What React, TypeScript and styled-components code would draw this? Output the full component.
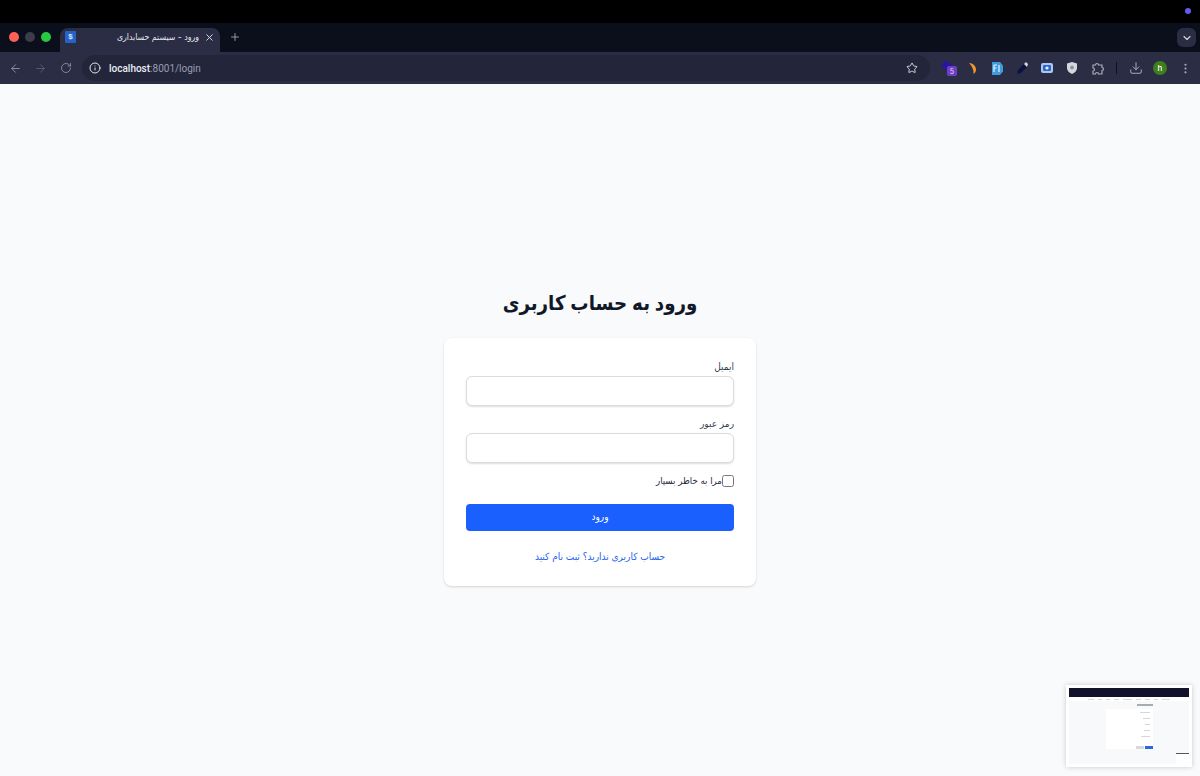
import styled, { createGlobalStyle } from "styled-components"
import {
  ArrowLeft,
  ArrowRight,
  ChevronDown,
  Download,
  EllipsisVertical,
  Info,
  Plus,
  RotateCw,
  Star,
  X,
} from "lucide-react"

const GlobalStyle = createGlobalStyle`
  html, body {
    margin: 0;
    height: 100%;
    background: #f9fafb;
  }
  * {
    box-sizing: border-box;
  }
  #root {
    height: 776px;
    overflow: hidden;
    font-family: "Inter", "DejaVu Sans Condensed", "DejaVu Sans", sans-serif;
  }
`

const Screen = styled.div`
  display: flex;
  flex-direction: column;
  height: 776px;
  position: relative;
`

const MenuStrip = styled.div`
  height: 23px;
  background: #000;
  display: flex;
  justify-content: flex-end;
  align-items: center;
  padding: 0 9px 1px 0;
`

const StatusDot = styled.span`
  width: 6px;
  height: 6px;
  border-radius: 50%;
  background: #5f5cf0;
`

const TabBar = styled.div`
  height: 29px;
  background: #0b0e1b;
  display: flex;
  align-items: flex-end;
  padding-left: 9px;
`

const Lights = styled.div`
  display: flex;
  gap: 6px;
  height: 29px;
  align-items: center;
  padding-bottom: 1px;
`

const Light = styled.span<{ $color: string }>`
  width: 10px;
  height: 10px;
  border-radius: 50%;
  background: ${({ $color }) => $color};
`

const Tab = styled.div`
  width: 160px;
  height: 24px;
  margin-left: 9px;
  background: #2a2d43;
  border-radius: 8px 8px 0 0;
  display: flex;
  align-items: center;
  padding: 0 5px 6px;
  color: #e6e7ee;
`

const Favicon = styled.span`
  width: 11px;
  height: 12px;
  flex: none;
  background: #2563c9;
  border-radius: 1px;
  color: #dbe6fb;
  font: 700 8px/12px "Liberation Sans", sans-serif;
  text-align: center;
`

const TabTitle = styled.span`
  flex: 1;
  direction: rtl;
  font-size: 8.7px;
  line-height: 12px;
  white-space: nowrap;
  padding-right: 5px;
  text-align: right;
`

const NewTab = styled.span`
  height: 24px;
  margin-left: 9px;
  padding-bottom: 6px;
  display: flex;
  align-items: center;
  color: #b4b7c6;
`

const TabMenu = styled.span`
  margin-left: auto;
  margin-right: 4px;
  margin-bottom: 5px;
  width: 19px;
  height: 19px;
  border-radius: 6px;
  background: #2a2d43;
  color: #d6d8e2;
  display: flex;
  align-items: center;
  justify-content: center;
`

const Toolbar = styled.div`
  height: 32px;
  background: #2a2d43;
  display: flex;
  align-items: center;
  padding-left: 9px;
`

const NavButton = styled.span<{ $dim?: boolean }>`
  width: 13px;
  display: flex;
  justify-content: center;
  margin-right: 12px;
  color: ${({ $dim }) => ($dim ? "#565a73" : "#8b8ea3")};
`

const AddressBar = styled.div`
  width: 848px;
  height: 26px;
  margin-left: -2px;
  border-radius: 13px;
  background: #23263b;
  display: flex;
  align-items: center;
  padding: 0 12px 0 7px;
  color: #e4e5ec;
`

const Url = styled.span`
  margin-left: 8px;
  font-family: "Roboto", sans-serif;
  font-size: 10px;
  color: #9a9db0;
  flex: 1;
  b {
    color: #eceef4;
    font-weight: 500;
  }
`

const Extensions = styled.div`
  flex: 1;
  display: flex;
  align-items: center;
  padding-left: 6px;
  color: #a9acbd;
`

const Ext = styled.span<{ $w: number }>`
  width: ${({ $w }) => $w}px;
  display: flex;
  justify-content: center;
  align-items: center;
  flex: none;
`

const Divider = styled.span`
  width: 1px;
  height: 12px;
  background: #0f1120;
  margin: 0 6px 0 5px;
`

const Avatar = styled.span`
  width: 14px;
  height: 14px;
  border-radius: 50%;
  background: #3f7d1d;
  color: #fff;
  font: 500 8px/14px "Inter", sans-serif;
  text-align: center;
`

const Page = styled.main`
  flex: 1;
  background: #f9fafb;
  display: flex;
  flex-direction: column;
  align-items: center;
  padding-top: 202px;
  direction: rtl;
`

const Heading = styled.h1`
  margin: 0 0 18px;
  font-size: 20.3px;
  line-height: 34px;
  font-weight: 700;
  color: #111827;
`

const Card = styled.form`
  width: 312px;
  height: 248px;
  background: #fff;
  border-radius: 8px;
  box-shadow: 0 1px 3px rgba(0, 0, 0, 0.1), 0 1px 2px rgba(0, 0, 0, 0.06);
  padding: 20px 22px 0;
  display: flex;
  flex-direction: column;
`

const Field = styled.label`
  display: flex;
  flex-direction: column;
  gap: 2px;
  margin-bottom: 9px;
  font-size: 10px;
  line-height: 16px;
  color: #374151;
`

const Input = styled.input`
  height: 30px;
  border: 1px solid #d9dce1;
  border-radius: 6px;
  background: #fff;
  box-shadow: 0 1px 2px rgba(0, 0, 0, 0.14);
  outline: none;
`

const Remember = styled.label`
  display: flex;
  align-items: center;
  height: 12px;
  margin-top: 3px;
  font-size: 9.6px;
  line-height: 10px;
  color: #1f2937;
`

const Check = styled.input`
  appearance: none;
  width: 12px;
  height: 12px;
  margin: 0;
  border: 1px solid #767676;
  border-radius: 2.5px;
  background: #fff;
`

const Submit = styled.button`
  flex: none;
  margin-top: 17px;
  height: 27px;
  padding: 0 0 3px;
  border: none;
  border-radius: 4px;
  background: #1a60ff;
  color: #fff;
  font-family: inherit;
  font-size: 10px;
`

const SignUp = styled.a`
  margin-top: 16px;
  text-align: center;
  font-size: 10px;
  line-height: 18px;
  color: #2563eb;
`

const Preview = styled.div`
  position: absolute;
  left: 1066px;
  top: 685px;
  width: 126px;
  height: 82px;
  background: #f8f9fb;
  border: 3px solid #fff;
  box-shadow: 0 0 5px rgba(0, 0, 0, 0.2);
  display: flex;
  flex-direction: column;
`

const PreviewChrome = styled.div`
  height: 9px;
  background: #10132a;
  flex: none;
`

const PreviewNav = styled.div`
  height: 4px;
  background: #fff;
  flex: none;
  display: flex;
  align-items: center;
  justify-content: center;
  gap: 4px;
`

const PreviewBar = styled.span<{ $w: number; $tone?: string }>`
  width: ${({ $w }) => $w}px;
  height: 1px;
  flex: none;
  background: ${({ $tone }) => $tone || "#d4d6db"};
`

const PreviewBody = styled.div`
  flex: 1;
  display: flex;
  flex-direction: column;
  align-items: center;
  padding-top: 3px;
`

const PreviewTitle = styled.span`
  width: 16px;
  height: 2px;
  margin-left: 32px;
  background: #a7abb2;
`

const PreviewCard = styled.div`
  width: 47px;
  height: 40px;
  margin-top: 3px;
  background: #fff;
  display: flex;
  flex-direction: column;
  align-items: flex-end;
  gap: 5px;
  padding: 3px;
`

const PreviewActions = styled.div`
  margin-top: auto;
  margin-right: -3px;
  margin-bottom: -3px;
  display: flex;
  gap: 1px;
`

const PreviewButton = styled.span<{ $tone: string }>`
  height: 3px;
  width: 8px;
  background: ${({ $tone }) => $tone};
`

const PreviewFooter = styled.div`
  margin-top: auto;
  margin-bottom: 1px;
`

const PreviewMini = styled.span`
  position: absolute;
  right: 0;
  bottom: 0;
  width: 13px;
  height: 11px;
  background: #fff;
  border-top: 1px solid #555;
`

const navWidths = [6, 4, 4, 5, 9, 5, 5, 4, 8]
const cardRows = [10, 7, 5, 6, 9]

export default function App() {
  return (
    <Screen>
      <GlobalStyle />
      <MenuStrip>
        <StatusDot />
      </MenuStrip>
      <TabBar>
        <Lights>
          <Light $color="#ff5f57" />
          <Light $color="#3b3d4a" />
          <Light $color="#28c840" />
        </Lights>
        <Tab>
          <Favicon>$</Favicon>
          <TabTitle dir="rtl">ورود - سیستم حسابداری</TabTitle>
          <X size={11} strokeWidth={2} />
        </Tab>
        <NewTab>
          <Plus size={12} strokeWidth={1.6} />
        </NewTab>
        <TabMenu>
          <ChevronDown size={12} strokeWidth={2.2} />
        </TabMenu>
      </TabBar>
      <Toolbar>
        <NavButton>
          <ArrowLeft size={13} strokeWidth={1.8} />
        </NavButton>
        <NavButton $dim>
          <ArrowRight size={13} strokeWidth={1.8} />
        </NavButton>
        <NavButton>
          <RotateCw size={12} strokeWidth={1.8} />
        </NavButton>
        <AddressBar>
          <Info size={12} strokeWidth={2} />
          <Url>
            <b>localhost</b>:8001/login
          </Url>
          <Star size={12} strokeWidth={1.8} />
        </AddressBar>
        <Extensions>
          <Ext $w={25}>
            <svg width="16" height="16" viewBox="0 0 16 16">
              <path d="M0 5l4-4 7 3v6l-5 1z" fill="#2c13a0" />
              <rect x="6" y="6" width="10" height="10" rx="2" fill="#6d3fc4" />
              <text x="11" y="13.500" fontSize="7" fontFamily="Inter" fill="#e4dcf8" textAnchor="middle">
                5
              </text>
            </svg>
          </Ext>
          <Ext $w={24}>
            <svg width="8" height="13" viewBox="0 0 8 13">
              <path d="M0 1c4 0 7 3 7 6.500 0 2-1 3.800-2.500 4.500.3-3-.5-7-4.500-11z" fill="#f0982a" />
            </svg>
          </Ext>
          <Ext $w={24}>
            <svg width="12" height="13" viewBox="0 0 12 13">
              <path d="M1 0h8l3 3.500v6L9 13H1z" fill="#3f9bdc" />
              <path d="M3 3h3M3 3v7M3 6h2.500M8 3v7" stroke="#e8f4fc" strokeWidth="1.200" fill="none" />
            </svg>
          </Ext>
          <Ext $w={26}>
            <svg width="13" height="14" viewBox="0 0 13 14">
              <path d="M1 13l1-4 6-6 3 3-6 6z" fill="#0c1340" />
              <path d="M8 3l2-2 2 2-1 3z" fill="#d4d6e0" />
            </svg>
          </Ext>
          <Ext $w={24}>
            <svg width="12" height="10" viewBox="0 0 12 10">
              <rect width="12" height="10" rx="2" fill="#a9c9ee" />
              <rect x="2" y="2" width="8" height="6" rx="1" fill="#2f66c8" />
              <circle cx="6" cy="5" r="1.600" fill="#e8f0fb" />
            </svg>
          </Ext>
          <Ext $w={26}>
            <svg width="10" height="12" viewBox="0 0 10 12">
              <path d="M5 0l5 1.500V6c0 3-2.500 5-5 6-2.500-1-5-3-5-6V1.500z" fill="#d5d7df" />
              <circle cx="5" cy="5.500" r="2" fill="#8f93a3" />
            </svg>
          </Ext>
          <Ext $w={26}>
            <svg width="13" height="13" viewBox="0 0 13 13" fill="none" stroke="currentColor" strokeWidth="1.200">
              <path d="M1 3h2.500a1.500 1.500 0 0 1 3 0H10v2.500a1.500 1.500 0 0 1 0 3V12H6.500a1.500 1.500 0 0 0-3 0H1V9a1.500 1.500 0 0 0 0-3z" />
            </svg>
          </Ext>
          <Divider />
          <Ext $w={25}>
            <Download size={14} strokeWidth={1.7} />
          </Ext>
          <Ext $w={24}>
            <Avatar>h</Avatar>
          </Ext>
          <Ext $w={26}>
            <EllipsisVertical size={13} strokeWidth={2} />
          </Ext>
        </Extensions>
      </Toolbar>
      <Page>
        <Heading>ورود به حساب کاربری</Heading>
        <Card>
          <Field>
            ایمیل
            <Input type="email" />
          </Field>
          <Field>
            رمز عبور
            <Input type="password" />
          </Field>
          <Remember>
            <Check type="checkbox" />
            مرا به خاطر بسپار
          </Remember>
          <Submit type="button">ورود</Submit>
          <SignUp>حساب کاربری ندارید؟ ثبت نام کنید</SignUp>
        </Card>
      </Page>
      <Preview>
        <PreviewChrome />
        <PreviewNav>
          {navWidths.map((w, i) => (
            <PreviewBar key={i} $w={w} />
          ))}
        </PreviewNav>
        <PreviewBody>
          <PreviewTitle />
          <PreviewCard>
            {cardRows.map((w, i) => (
              <PreviewBar key={i} $w={w} />
            ))}
            <PreviewActions>
              <PreviewButton $tone="#d5d8dd" />
              <PreviewButton $tone="#2f66e0" />
            </PreviewActions>
          </PreviewCard>
          <PreviewFooter>
            <PreviewBar $w={22} $tone="#dcdee2" />
          </PreviewFooter>
        </PreviewBody>
        <PreviewMini />
      </Preview>
    </Screen>
  )
}
